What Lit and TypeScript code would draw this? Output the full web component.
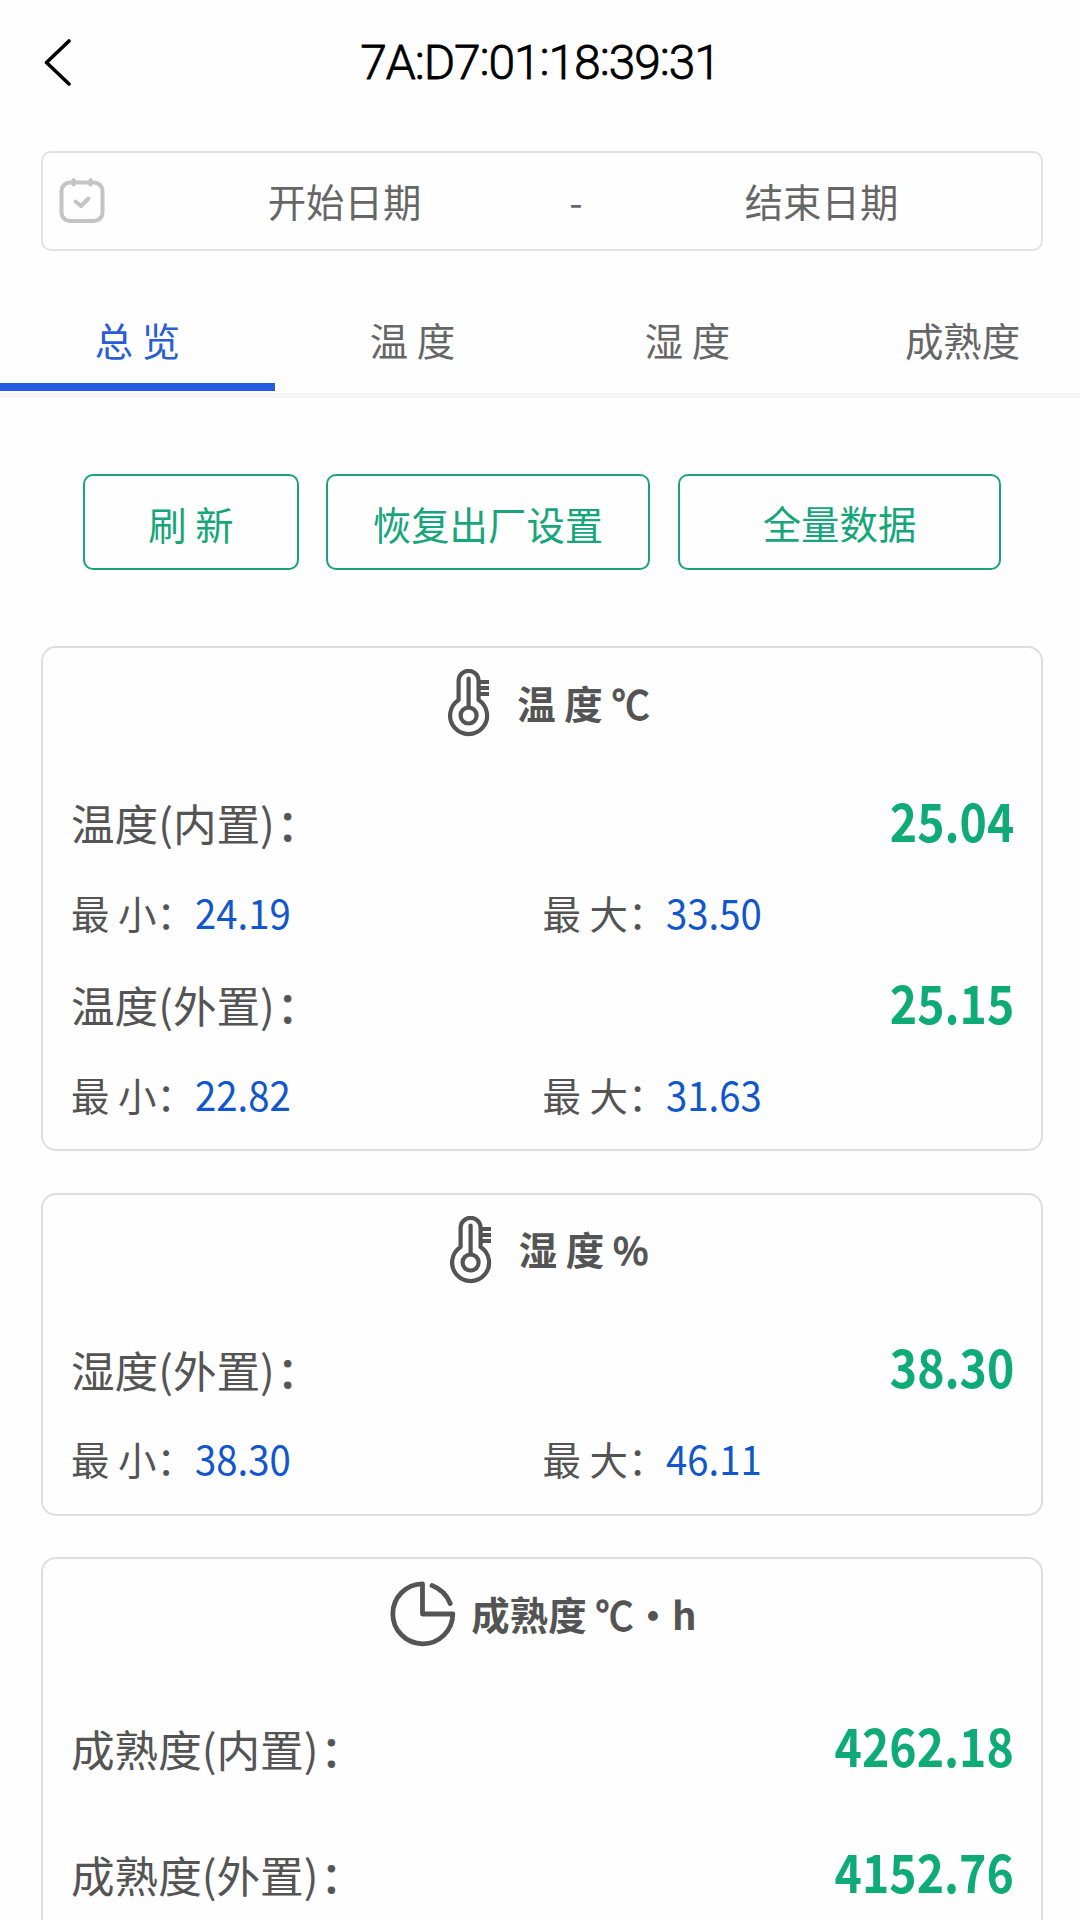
import { LitElement, html, css, nothing } from "lit";
import { customElement, property } from "lit/decorators.js";

interface Metric {
  label: string;
  value: string;
  min?: string;
  max?: string;
}

const thermometer = html`<svg width="42" height="68" viewBox="0 0 42 68" fill="none" stroke="#545454">
  <path d="M10.6 31V11.8a10 10 0 0 1 20 0V31A18.5 18.5 0 1 1 10.6 31Z" stroke-width="4.2" stroke-linejoin="round" />
  <circle cx="20.6" cy="46.5" r="8" stroke-width="4.2" />
  <path d="M20.6 9.5v29" stroke-width="4.2" stroke-linecap="round" />
  <path d="M31 13h10M31 19h10M31 25h10" stroke-width="3.8" />
</svg>`;

const pie = html`<svg width="66" height="66" viewBox="0 0 66 66" fill="none" stroke="#545454" stroke-width="4.8" stroke-linejoin="round" stroke-linecap="round">
  <path d="M32.5 2.8A30 30 0 1 0 62.8 33H32.5Z" />
  <path d="M42 4.6Q55 9.5 60.2 22.5" />
</svg>`;

@customElement("metric-card")
export class MetricCard extends LitElement {
  @property() name = "";
  @property() unit = "";
  @property() suffix = "";
  @property() icon = "thermometer";
  @property({ attribute: false }) metrics: Metric[] = [];

  static styles = css`
    :host { display: block; }
    .card { box-sizing: border-box; border: 2px solid #dedede; border-radius: 15px; padding: 0 27px 7px 28px; color: #545454; }
    .head { display: flex; align-items: center; justify-content: center; height: 110px; margin-bottom: 20px; padding-left: 13px; }
    .head svg { display: block; flex: none; margin-right: 27px; }
    .head.pie { padding-left: 2px; }
    .pie svg { margin-right: 15px; }
    .heading { font-size: 38.4px; font-weight: 700; white-space: pre; padding-bottom: 3px; }
    .unit { font-weight: 400; -webkit-text-stroke: 1.3px #545454; }
    .row { display: flex; align-items: center; height: 91px; }
    .tall .row { height: 126px; }
    .tall .head { margin-bottom: 17px; }
    .main { justify-content: space-between; }
    .label { font-size: 43.6px; white-space: pre; padding-bottom: 3px; }
    .colon { margin-left: 2px; -webkit-text-stroke: 0.8px #545454; }
    .value { font-size: 53px; font-weight: 700; color: #0fab77; padding-bottom: 10px; transform: scaleX(0.875); transform-origin: right; }
    .cell { flex: 1; display: flex; align-items: baseline; font-size: 38.4px; padding-bottom: 6px; }
    .num { color: #1256cd; font-size: 41px; line-height: 50px; transform: scaleX(0.935); transform-origin: left; }
  `;

  render() {
    const tall = this.metrics.every((m) => !m.min);
    return html`<section class="card ${tall ? "tall" : ""}">
      <div class="head ${this.icon}">${this.icon === "pie" ? pie : thermometer}<span class="heading">${this.name} <span class="unit">${this.unit}</span>${this.suffix}</span></div>
      ${this.metrics.map(
        (m) => html`<div class="row main"><span class="label">${m.label}<span class="colon">：</span></span><span class="value">${m.value}</span></div>
          ${m.min
            ? html`<div class="row">
                <div class="cell"><span>最 小：</span><span class="num">${m.min}</span></div>
                <div class="cell"><span>最 大：</span><span class="num">${m.max}</span></div>
              </div>`
            : nothing}`
      )}
    </section>`;
  }
}

@customElement("app-root")
export class AppRoot extends LitElement {
  static styles = css`
    :host { display: block; height: 1920px; overflow: hidden; background: #fefefe; font-family: "Noto Sans CJK SC", sans-serif; }
    .bar { display: grid; grid-template-columns: 120px 1fr 120px; align-items: center; height: 126px; }
    .back { display: block; margin-left: 43px; }
    .title { text-align: center; font-family: Roboto, sans-serif; font-weight: 300; font-size: 48px; line-height: 56px; letter-spacing: -1.1px; color: #000; -webkit-text-stroke: 0.8px #000; }
    .sep { vertical-align: 4px; line-height: 1; }
    .range { box-sizing: border-box; display: flex; align-items: center; height: 100px; margin: 25px 37px 0 41px; border: 2px solid #e2e2e4; border-radius: 10px; font-size: 38.4px; color: #666; padding: 0 1px 0 16px; }
    .range svg { flex: none; display: block; margin-right: 21px; }
    .date { flex: 1; text-align: center; padding-bottom: 3px; }
    .dash { box-sizing: border-box; width: 40px; padding: 0 14px 3px 0; text-align: center; }
    .tabs { display: flex; margin-top: 40px; width: 1100px; border-bottom: 5px solid #f5f5f7; height: 102px; }
    .tab { box-sizing: border-box; width: 275px; height: 100px; border-bottom: 8px solid transparent; text-align: center; line-height: 97px; font-size: 38.4px; color: #666; }
    .active { color: #2a5cd8; border-bottom-color: #235ce0; }
    .actions { display: grid; grid-template-columns: 216px 324px 324px; column-gap: 27px; margin: 76px 79px 0 83px; }
    .btn { box-sizing: border-box; height: 96px; border: 2px solid #1aa37a; border-radius: 10px; background: none; color: #16a67a; font-family: inherit; font-size: 38.4px; text-align: center; padding: 2px 0 0; line-height: 86px; }
    .btn:last-child { margin-left: 1px; padding: 0 0 1px; }
    .cards { display: flex; flex-direction: column; gap: 41.5px; margin: 76px 37px 0 41px; }
  `;

  render() {
    const groups = ["D7", "01", "18", "39", "31"];
    return html`
      <header class="bar">
        <svg class="back" width="30" height="48" viewBox="0 0 30 48" fill="none" stroke="#000" stroke-width="3.6" stroke-linecap="round" stroke-linejoin="round">
          <path d="M26 2L3.5 23.5L26 45" />
        </svg>
        <div class="title">7A:${groups.map((g, i) => html`${i ? html`<span class="sep">:</span>` : nothing}${g}`)}</div>
      </header>
      <div class="range">
        <svg width="46" height="46" viewBox="0 0 46 46" fill="none" stroke="#c4c4c6" stroke-width="4" stroke-linecap="round" stroke-linejoin="round">
          <rect x="2.5" y="4.5" width="41" height="38.5" rx="8.5" />
          <path d="M14.5 2V6.5M31.5 2V6.5" />
          <path d="M16.5 23.5L22 28L29.5 20.5" />
        </svg>
        <span class="date">开始日期</span><span class="dash">-</span><span class="date">结束日期</span>
      </div>
      <nav class="tabs">
        ${["总 览", "温 度", "湿 度", "成熟度"].map((t, i) => html`<div class="tab ${i === 0 ? "active" : ""}">${t}</div>`)}
      </nav>
      <div class="actions">
        <button class="btn">刷 新</button><button class="btn">恢复出厂设置</button><button class="btn">全量数据</button>
      </div>
      <main class="cards">
        <metric-card name="温 度" unit="℃" .metrics=${[
          { label: "温度(内置)", value: "25.04", min: "24.19", max: "33.50" },
          { label: "温度(外置)", value: "25.15", min: "22.82", max: "31.63" },
        ]}></metric-card>
        <metric-card name="湿 度" unit="%" .metrics=${[{ label: "湿度(外置)", value: "38.30", min: "38.30", max: "46.11" }]}></metric-card>
        <metric-card name="成熟度" unit="℃" suffix="・h" icon="pie" .metrics=${[
          { label: "成熟度(内置)", value: "4262.18" },
          { label: "成熟度(外置)", value: "4152.76" },
        ]}></metric-card>
      </main>
    `;
  }
}
